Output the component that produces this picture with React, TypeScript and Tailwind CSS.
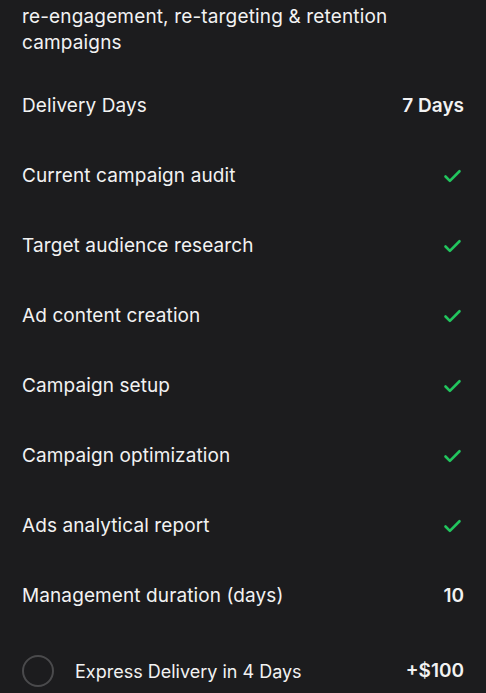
import { Check } from 'lucide-react'

const rows: { label: string; value?: string }[] = [
  { label: 'Delivery Days', value: '7 Days' },
  { label: 'Current campaign audit' },
  { label: 'Target audience research' },
  { label: 'Ad content creation' },
  { label: 'Campaign setup' },
  { label: 'Campaign optimization' },
  { label: 'Ads analytical report' },
  { label: 'Management duration (days)', value: '10' },
]

export default function App() {
  return (
    <div className="min-h-[693px] bg-[#1c1c1e] text-[#f2f2f2] px-[22px] font-['Inter',sans-serif] overflow-hidden">
      <p className="pt-[4px] text-[19px] leading-[26px] tracking-[0.15px]">
        re-engagement, re-targeting &amp; retention campaigns
      </p>

      <div className="mt-[15px]">
        {rows.map((r) => (
          <div key={r.label} className="h-[70px] flex items-center justify-between text-[19px]">
            <span className="tracking-[0.1px]">{r.label}</span>
            {r.value ? (
              <span className="font-semibold text-[19px]">{r.value}</span>
            ) : (
              <Check className="w-[21px] h-[21px] text-[#22c55e] mr-[1px]" strokeWidth={3} />
            )}
          </div>
        ))}
      </div>

      <div className="mt-[5px] h-[70px] flex items-center text-[18px]">
        <div className="w-[32px] h-[32px] rounded-full border-2 border-[#4a4a4c]" />
        <span className="ml-[21px] flex-1">Express Delivery in 4 Days</span>
        <span className="font-semibold text-[19px]">+$100</span>
      </div>
    </div>
  )
}
